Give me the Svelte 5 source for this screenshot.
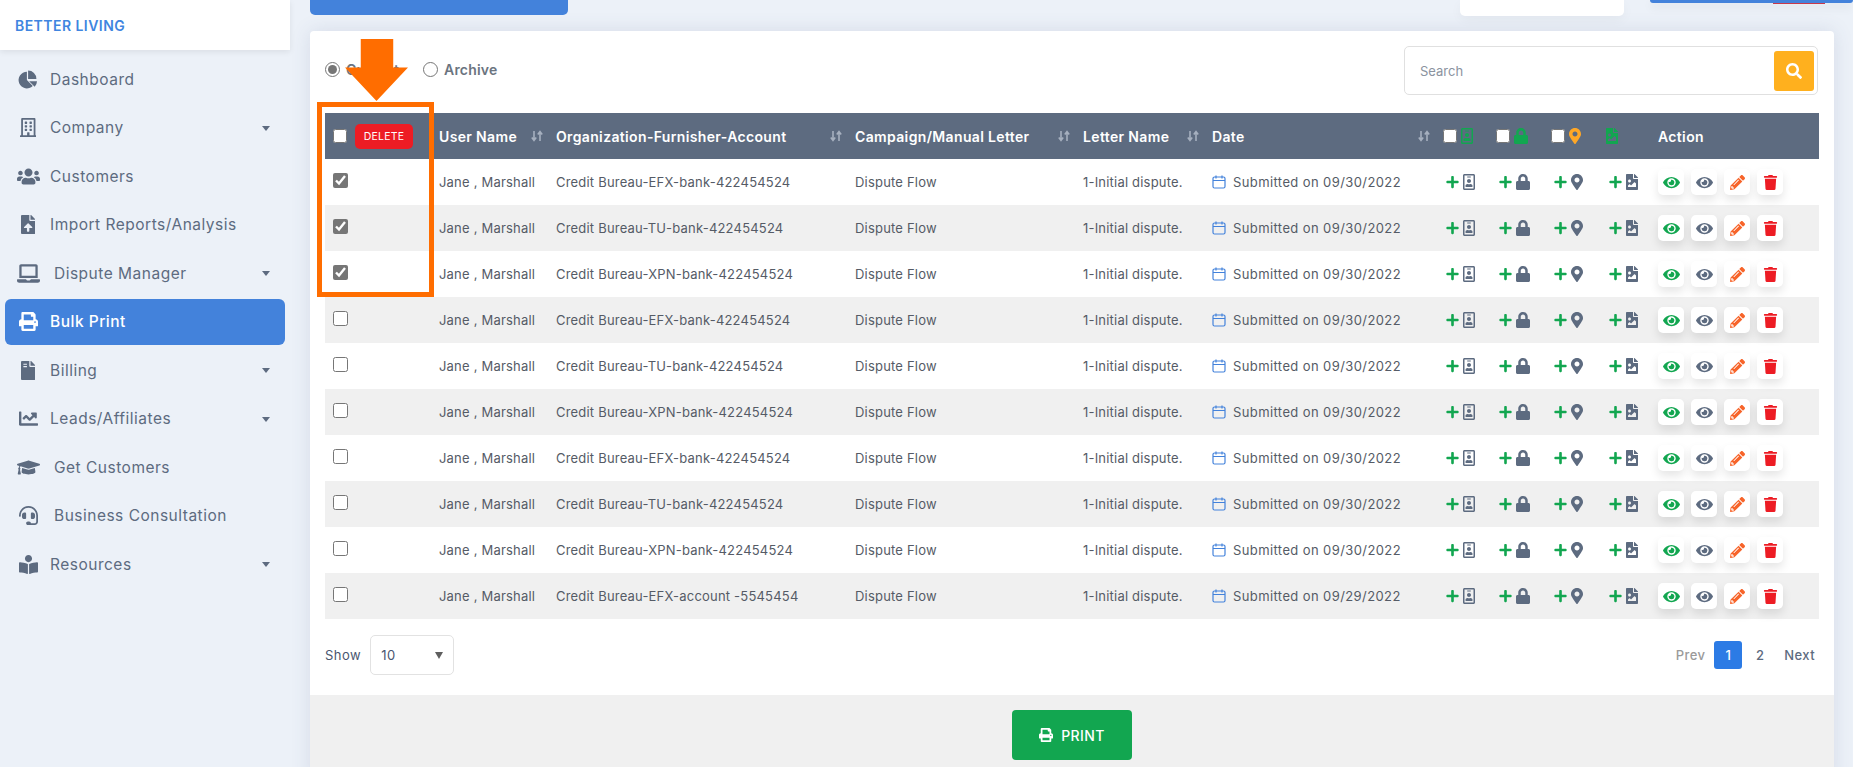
<script>
  const icons = {
    pie: [544, 'M240 48V272L398 430A224 224 0 1 1 240 48zM272 16A224 224 0 0 1 496 240H272zM300 304H512A224 224 0 0 1 450 454z'],
    building: [448, 'M128 148v-40c0-6.6 5.4-12 12-12h40c6.6 0 12 5.4 12 12v40c0 6.6-5.4 12-12 12h-40c-6.6 0-12-5.4-12-12zm140 12h40c6.6 0 12-5.4 12-12v-40c0-6.6-5.4-12-12-12h-40c-6.6 0-12 5.4-12 12v40c0 6.6 5.4 12 12 12zm-128 96h40c6.6 0 12-5.4 12-12v-40c0-6.6-5.4-12-12-12h-40c-6.6 0-12 5.4-12 12v40c0 6.6 5.4 12 12 12zm128 0h40c6.6 0 12-5.4 12-12v-40c0-6.6-5.4-12-12-12h-40c-6.6 0-12 5.4-12 12v40c0 6.6 5.4 12 12 12zm-76 84v-40c0-6.6-5.4-12-12-12h-40c-6.6 0-12 5.4-12 12v40c0 6.6 5.4 12 12 12h40c6.6 0 12-5.4 12-12zm76 12h40c6.6 0 12-5.4 12-12v-40c0-6.6-5.4-12-12-12h-40c-6.6 0-12 5.4-12 12v40c0 6.6 5.4 12 12 12zm180 124v36H0v-36c0-6.6 5.4-12 12-12h19.5V24c0-13.3 10.7-24 24-24h337c13.3 0 24 10.7 24 24v440H436c6.6 0 12 5.4 12 12zM79.5 463H192v-67c0-6.6 5.4-12 12-12h40c6.6 0 12 5.4 12 12v67h112.5V49L80 48l-.5 415z'],
    users: [640, 'M96 224c35.3 0 64-28.7 64-64s-28.7-64-64-64-64 28.7-64 64 28.7 64 64 64zm448 0c35.3 0 64-28.7 64-64s-28.7-64-64-64-64 28.7-64 64 28.7 64 64 64zm32 32h-64c-17.6 0-33.5 7.1-45.1 18.6 40.3 22.1 68.9 62 75.1 109.4h66c17.7 0 32-14.3 32-32v-32c0-35.3-28.7-64-64-64zm-256 0c61.9 0 112-50.1 112-112S381.9 32 320 32 208 82.1 208 144s50.1 112 112 112zm76.8 32h-8.3c-20.8 10-43.9 16-68.5 16s-47.6-6-68.5-16h-8.3C179.6 288 128 339.6 128 403.2V432c0 26.5 21.5 48 48 48h288c26.5 0 48-21.5 48-48v-28.8c0-63.6-51.6-115.2-115.2-115.2zm-223.7-13.4C161.5 263.1 145.6 256 128 256H64c-35.3 0-64 28.7-64 64v32c0 17.7 14.3 32 32 32h65.9c6.3-47.4 34.9-87.3 75.2-109.4z'],
    upload: [384, 'M224 136V0H24C10.7 0 0 10.7 0 24v464c0 13.3 10.7 24 24 24h336c13.3 0 24-10.7 24-24V160H248c-13.2 0-24-10.8-24-24zm65.18 216.01H224v80c0 8.84-7.16 16-16 16h-32c-8.84 0-16-7.16-16-16v-80H94.82c-14.28 0-21.41-17.29-11.27-27.36l96.42-95.7c6.65-6.61 17.39-6.61 24.04 0l96.42 95.7c10.15 10.07 3.03 27.36-11.25 27.36zM377 105L279.1 7c-4.5-4.5-10.6-7-17-7H256v128h128v-6.1c0-6.3-2.5-12.4-7-16.9z'],
    laptop: [640, 'M624 416H381.54c-.74 19.81-14.71 32-32.74 32H288c-18.69 0-33.02-17.47-32.77-32H16c-8.8 0-16 7.2-16 16v16c0 35.2 28.8 64 64 64h512c35.2 0 64-28.8 64-64v-16c0-8.8-7.2-16-16-16zM576 48c0-26.4-21.6-48-48-48H112C85.6 0 64 21.6 64 48v336h512V48zm-64 272H128V64h384v256z'],
    print: [512, 'M448 192V77.25c0-8.49-3.37-16.62-9.37-22.63L393.37 9.37c-6-6-14.14-9.37-22.63-9.37H96C78.33 0 64 14.33 64 32v160c-35.35 0-64 28.65-64 64v112c0 8.84 7.16 16 16 16h48v96c0 17.67 14.33 32 32 32h320c17.67 0 32-14.33 32-32v-96h48c8.84 0 16-7.16 16-16V256c0-35.35-28.65-64-64-64zm-64 256H128v-96h256v96zm0-224H128V64h192v48c0 8.84 7.16 16 16 16h48v96zm48 72c-13.25 0-24-10.75-24-24 0-13.26 10.75-24 24-24s24 10.74 24 24c0 13.25-10.75 24-24 24z'],
    invoice: [384, 'M377 105L279.1 7c-4.5-4.5-10.6-7-17-7H256v128h128v-6.1c0-6.3-2.5-12.4-7-16.9zM224 136V0H24C10.7 0 0 10.7 0 24v464c0 13.3 10.7 24 24 24h336c13.3 0 24-10.7 24-24V160H248c-13.2 0-24-10.8-24-24zM64 72h96v32H64zm0 64h96v32H64zm144 160c-40 0-48 50 0 58 28 5 28 22 0 22h-40v30h28v28h30v-28c44-2 46-62 0-72-30-6-28-20 0-20h36v-30h-26v-26h-30v28z'],
    chart: [512, 'M496 384H64V80c0-8.84-7.16-16-16-16H16C7.16 64 0 71.16 0 80v336c0 17.67 14.33 32 32 32h464c8.84 0 16-7.16 16-16v-32c0-8.84-7.16-16-16-16zM464 96H345.94c-21.38 0-32.09 25.85-16.97 40.97l32.4 32.4L288 242.75l-73.37-73.37c-12.5-12.5-32.76-12.5-45.25 0l-68.69 68.69c-6.25 6.25-6.25 16.38 0 22.63l22.62 22.62c6.25 6.25 16.38 6.25 22.63 0L192 237.25l73.37 73.37c12.5 12.5 32.76 12.5 45.25 0l96-96 32.4 32.4c15.12 15.12 40.97 4.41 40.97-16.97V112c.01-8.84-7.15-16-15.99-16z'],
    cap: [640, 'M622.34 153.2L343.4 67.5c-15.2-4.67-31.6-4.67-46.79 0L17.66 153.2c-23.54 7.23-23.54 38.36 0 45.59l48.63 14.94c-10.67 13.19-17.23 29.28-17.88 46.9C38.78 266.15 32 276.11 32 288c0 10.78 5.68 19.85 13.86 25.65L20.33 428.53C18.11 438.52 25.71 448 35.94 448h56.11c10.24 0 17.84-9.48 15.62-19.47L82.14 313.65C90.32 307.85 96 298.78 96 288c0-11.57-6.47-21.25-15.66-26.87.76-15.02 8.44-28.3 20.69-36.72L296.6 284.5c9.06 2.78 26.44 6.25 46.79 0l278.95-85.7c23.55-7.24 23.55-38.36 0-45.6zM352.79 315.09c-28.53 8.76-52.84 3.92-65.59 0l-145.02-44.55L128 384c0 35.35 85.96 64 192 64s192-28.65 192-64l-14.18-113.47-145.03 44.56z'],
    headset: [512, 'M192 208c0-17.67-14.33-32-32-32h-16c-35.35 0-64 28.65-64 64v48c0 35.35 28.65 64 64 64h16c17.67 0 32-14.33 32-32V208zm176 144c35.35 0 64-28.65 64-64v-48c0-35.35-28.65-64-64-64h-16c-17.67 0-32 14.33-32 32v112c0 17.67 14.33 32 32 32h16zM256 0C113.18 0 4.58 118.83 0 256v16c0 8.84 7.16 16 16 16h16c8.84 0 16-7.16 16-16v-16c0-114.69 93.31-208 208-208s208 93.31 208 208h-.12c.08 2.43.12 165.72.12 165.72 0 23.35-18.93 42.28-42.28 42.28H320c0-26.51-21.49-48-48-48h-32c-26.51 0-48 21.49-48 48s21.49 48 48 48h181.72c49.86 0 90.28-40.42 90.28-90.28V256C507.42 118.83 398.82 0 256 0z'],
    reader: [512, 'M352 96c0-53.02-42.98-96-96-96s-96 42.98-96 96 42.98 96 96 96 96-42.98 96-96zM233.59 241.1c-59.33-36.32-155.43-46.3-203.79-49.05C13.55 191.13 0 203.51 0 219.14v222.8c0 14.33 11.59 26.28 26.49 27.05 43.66 2.29 131.99 10.68 193.04 41.43 9.37 4.72 20.48-1.71 20.48-11.87V252.56c-.01-4.67-2.32-8.95-6.42-11.46zm248.61-49.05c-48.35 2.74-144.46 12.73-203.78 49.05-4.1 2.51-6.41 6.96-6.41 11.63v245.79c0 10.19 11.14 16.63 20.54 11.9 61.04-30.72 149.32-39.11 192.97-41.4 14.9-.78 26.49-12.73 26.49-27.06V219.14c-.01-15.63-13.56-28.01-26.81-27.09z'],
    search: [512, 'M505 442.7L405.3 343c-4.5-4.5-10.6-7-17-7H372c27.6-35.3 44-79.7 44-128C416 93.1 322.9 0 208 0S0 93.1 0 208s93.1 208 208 208c48.3 0 92.7-16.4 128-44v16.3c0 6.4 2.5 12.5 7 17l99.7 99.7c9.4 9.4 24.6 9.4 33.9 0l28.3-28.3c9.4-9.4 9.4-24.6.1-34zM208 336c-70.7 0-128-57.2-128-128 0-70.7 57.2-128 128-128 70.7 0 128 57.2 128 128 0 70.7-57.2 128-128 128z'],
    plus: [448, 'M416 208H272V64c0-17.67-14.33-32-32-32h-32c-17.67 0-32 14.33-32 32v144H32c-17.67 0-32 14.33-32 32v32c0 17.67 14.33 32 32 32h144v144c0 17.67 14.33 32 32 32h32c17.67 0 32-14.33 32-32V304h144c17.67 0 32-14.33 32-32v-32c0-17.67-14.33-32-32-32z'],
    badge: [384, 'M336 0H48C21.5 0 0 21.5 0 48v416c0 26.5 21.5 48 48 48h288c26.5 0 48-21.5 48-48V48c0-26.5-21.5-48-48-48zm0 464H48V48h288v416zM144 112h96c8.8 0 16-7.2 16-16s-7.2-16-16-16h-96c-8.8 0-16 7.2-16 16s7.2 16 16 16zm48 176c35.3 0 64-28.7 64-64s-28.7-64-64-64-64 28.7-64 64 28.7 64 64 64zm-89.6 128h179.2c12.4 0 22.4-8.6 22.4-19.2v-19.2c0-31.8-30.1-57.6-67.2-57.6-10.8 0-18.7 8-44.8 8-26.9 0-33.4-8-44.8-8-37.1 0-67.2 25.8-67.2 57.6v19.2c0 10.6 10 19.2 22.4 19.2z'],
    lock: [448, 'M400 224h-24v-72C376 68.2 307.8 0 224 0S72 68.2 72 152v72H48c-26.5 0-48 21.5-48 48v192c0 26.5 21.5 48 48 48h352c26.5 0 48-21.5 48-48V272c0-26.5-21.5-48-48-48zm-104 0H152v-72c0-39.7 32.3-72 72-72s72 32.3 72 72v72z'],
    marker: [384, 'M172.268 501.67C26.97 291.031 0 256.28 0 192 0 85.961 85.961 0 192 0s192 85.961 192 192c0 64.28-26.97 99.031-172.268 309.67-9.535 13.774-29.93 13.773-39.464 0zM192 272c44.183 0 80-35.817 80-80s-35.817-80-80-80-80 35.817-80 80 35.817 80 80 80z'],
    fileimg: [384, 'M384 121.941V128H256V0h6.059a24 24 0 0 1 16.97 7.029l97.941 97.941a24.002 24.002 0 0 1 7.03 16.971zM248 160c-13.2 0-24-10.8-24-24V0H24C10.745 0 0 10.745 0 24v464c0 13.255 10.745 24 24 24h336c13.255 0 24-10.745 24-24V160H248zm-135.455 16c26.51 0 48 21.49 48 48s-21.49 48-48 48-48-21.49-48-48 21.491-48 48-48zm208 240h-256l.485-48.485L104.545 328c4.686-4.686 11.799-4.201 16.485.485L160.545 368 264.06 264.485c4.686-4.686 12.284-4.686 16.971 0L320.545 304v112z'],
    eye: [576, 'M572.52 241.4C518.29 135.59 410.93 64 288 64S57.68 135.64 3.48 241.41a32.35 32.35 0 0 0 0 29.19C57.71 376.41 165.07 448 288 448s230.32-71.64 284.52-177.41a32.35 32.35 0 0 0 0-29.19zM288 400a144 144 0 1 1 144-144 143.93 143.93 0 0 1-144 144zm0-240a95.31 95.31 0 0 0-25.31 3.79 47.85 47.85 0 0 1-66.9 66.9A95.78 95.78 0 1 0 288 160z'],
    pencil: [512, 'M497.9 142.1l-46.1 46.1c-4.7 4.7-12.3 4.7-17 0l-111-111c-4.7-4.7-4.7-12.3 0-17l46.1-46.1c18.7-18.7 49.1-18.7 67.9 0l60.1 60.1c18.8 18.7 18.8 49.1 0 67.9zM284.2 99.8L21.6 362.4.4 483.9c-2.9 16.4 11.4 30.6 27.8 27.8l121.5-21.3 262.6-262.6c4.7-4.7 4.7-12.3 0-17l-111-111c-4.8-4.7-12.4-4.7-17.1 0zM124.1 339.9c-5.5-5.5-5.5-14.3 0-19.8l154-154c5.5-5.5 14.3-5.5 19.8 0s5.5 14.3 0 19.8l-154 154c-5.5 5.5-14.3 5.5-19.8 0zM88 424h48v36.3l-64.5 11.3-31.1-31.1L51.7 376H88v48z'],
    trash: [448, 'M432 32H312l-9.4-18.7A24 24 0 0 0 281.1 0H166.8a23.72 23.72 0 0 0-21.4 13.3L136 32H16A16 16 0 0 0 0 48v32a16 16 0 0 0 16 16h416a16 16 0 0 0 16-16V48a16 16 0 0 0-16-16zM53.2 467a48 48 0 0 0 47.9 45h245.8a48 48 0 0 0 47.9-45L416 128H32z']
  };

  const menu = [
    { label: 'Dashboard', icon: 'pie' },
    { label: 'Company', icon: 'building', caret: true },
    { label: 'Customers', icon: 'users' },
    { label: 'Import Reports/Analysis', icon: 'upload' },
    { label: 'Dispute Manager', icon: 'laptop', caret: true, wide: true },
    { label: 'Bulk Print', icon: 'print', active: true },
    { label: 'Billing', icon: 'invoice', caret: true },
    { label: 'Leads/Affiliates', icon: 'chart', caret: true },
    { label: 'Get Customers', icon: 'cap', wide: true },
    { label: 'Business Consultation', icon: 'headset', wide: true },
    { label: 'Resources', icon: 'reader', caret: true }
  ];

  const columns = ['User Name', 'Organization-Furnisher-Account', 'Campaign/Manual Letter', 'Letter Name', 'Date'];

  const accounts = [
    'EFX-bank-422454524', 'TU-bank-422454524', 'XPN-bank-422454524',
    'EFX-bank-422454524', 'TU-bank-422454524', 'XPN-bank-422454524',
    'EFX-bank-422454524', 'TU-bank-422454524', 'XPN-bank-422454524',
    'EFX-account -5545454'
  ];

  const rows = accounts.map((account, i) => ({
    org: `Credit Bureau-${account}`,
    date: i === 9 ? '09/29/2022' : '09/30/2022',
    checked: i < 3
  }));
</script>

{#snippet icon(name, cls)}
  <svg class="icon {cls}" viewBox="0 0 {icons[name][0]} 512" aria-hidden="true"><path d={icons[name][1]} /></svg>
{/snippet}

{#snippet sortArrows()}
  <svg class="sort" viewBox="0 0 12 12" aria-hidden="true">
    <path d="M3 1v9M.8 7.6 3 10.4l2.2-2.8M9 11V2M6.8 4.4 9 1.6l2.2 2.8" />
  </svg>
{/snippet}

<div class="page">
  <aside class="sidebar">
    <div class="logo">BETTER LIVING</div>
    <nav class="menu">
      {#each menu as item (item.label)}
        <div class="item" class:active={item.active}>
          <span class="item-icon">{@render icon(item.icon, 'side-icon')}</span>
          <span class="item-label" class:wide={item.wide}>{item.label}</span>
          {#if item.caret}<span class="caret"></span>{/if}
        </div>
      {/each}
    </nav>
  </aside>

  <main class="content">
    <div class="topbar">
      <div class="top-btn"></div>
      <div class="top-card"></div>
      <div class="top-bar-blue"></div>
    </div>

    <section class="card">
      <div class="card-body">
        <div class="filters">
          <div class="radios">
            <label class="radio"><input type="radio" name="kind" checked /> Current</label>
            <label class="radio"><input type="radio" name="kind" /> Archive</label>
          </div>
          <div class="search">
            <span class="search-text">Search</span>
            <button class="search-btn">{@render icon('search', 'search-icon')}</button>
          </div>
        </div>

        <table>
          <thead>
            <tr>
              <th><div class="th-in"><input type="checkbox" /><button class="delete">DELETE</button></div></th>
              {#each columns as col (col)}
                <th><div class="th-in between"><span>{col}</span>{@render sortArrows()}</div></th>
              {/each}
              <th><div class="th-in tight"><input type="checkbox" />{@render icon('badge', 'cell-icon green')}</div></th>
              <th><div class="th-in tight"><input type="checkbox" />{@render icon('lock', 'cell-icon green')}</div></th>
              <th><div class="th-in tight"><input type="checkbox" />{@render icon('marker', 'cell-icon amber')}</div></th>
              <th><div class="th-in">{@render icon('fileimg', 'cell-icon green')}</div></th>
              <th>Action</th>
            </tr>
          </thead>
          <tbody>
            {#each rows as row, i (i)}
              <tr>
                <td><input class="row-check" type="checkbox" checked={row.checked} /></td>
                <td>Jane , Marshall</td>
                <td>{row.org}</td>
                <td>Dispute Flow</td>
                <td>1-Initial dispute.</td>
                <td>
                  <div class="date">
                    <svg class="cal" viewBox="0 0 14 14" aria-hidden="true">
                      <rect x="1" y="2" width="12" height="11" rx="1.5" />
                      <path d="M1 5.5h12M4 .5v3M10 .5v3" />
                    </svg>
                    Submitted on {row.date}
                  </div>
                </td>
                {#each ['badge', 'lock', 'marker', 'fileimg'] as name (name)}
                  <td>
                    <div class="add">
                      {@render icon('plus', 'plus')}
                      {@render icon(name, 'cell-icon slate')}
                    </div>
                  </td>
                {/each}
                <td>
                  <div class="actions">
                    <button class="act">{@render icon('eye', 'act-icon green')}</button>
                    <button class="act">{@render icon('eye', 'act-icon slate')}</button>
                    <button class="act">{@render icon('pencil', 'act-icon orange')}</button>
                    <button class="act">{@render icon('trash', 'act-icon red')}</button>
                  </div>
                </td>
              </tr>
            {/each}
          </tbody>
        </table>

        <div class="table-foot">
          <div class="show">
            <span>Show</span>
            <div class="select"><span>10</span><span class="select-arrow"></span></div>
          </div>
          <div class="pager">
            <span class="prev">Prev</span>
            <span class="num current">1</span>
            <span class="num">2</span>
            <span class="next">Next</span>
          </div>
        </div>
      </div>

      <div class="card-foot">
        <button class="print">{@render icon('print', 'print-icon')} PRINT</button>
      </div>
    </section>
  </main>

  <div class="mark-box"></div>
  <svg class="mark-arrow" viewBox="0 0 64 63" aria-hidden="true">
    <polygon points="16,0 49,0 49,29 64,29 32,63 0,29 16,29" />
  </svg>
</div>

<style>
  :global(body) {
    margin: 0;
    background: #fff;
    font-family: Inter, 'Open Sans', sans-serif;
  }

  .page {
    position: relative;
    display: flex;
    width: 1853px;
    height: 767px;
    overflow: hidden;
    background: #ecf1f8;
  }

  .sidebar {
    width: 290px;
    flex: none;
  }

  .logo {
    height: 50px;
    display: flex;
    align-items: center;
    padding-left: 15px;
    background: #fff;
    box-shadow: 0 2px 6px rgba(0, 0, 0, 0.08);
    color: #3f85e0;
    font-size: 14px;
    font-weight: 600;
    letter-spacing: 0.45px;
  }

  .menu {
    padding-top: 6px;
    display: flex;
    flex-direction: column;
    gap: 2.5px;
  }

  .item {
    position: relative;
    height: 46px;
    margin: 0 5px;
    width: 280px;
    display: flex;
    align-items: center;
    color: #5d6b80;
    border-radius: 6px;
    font-size: 15.5px;
    letter-spacing: 0.5px;
  }

  .item.active {
    background: #4382db;
    color: #fff;
    font-weight: 500;
  }

  .item-icon {
    width: 45px;
    flex: none;
    display: flex;
    justify-content: center;
    padding-left: 5px;
    box-sizing: border-box;
    transform: translateX(-2px);
  }

  .item-label.wide {
    margin-left: 4px;
  }

  .caret {
    position: absolute;
    right: 15px;
    top: 21px;
    border-left: 4.5px solid transparent;
    border-right: 4.5px solid transparent;
    border-top: 5px solid #5d6b80;
  }

  .icon {
    display: block;
    fill: currentColor;
  }

  :global(.side-icon) {
    height: 19px;
    max-width: 23px;
  }

  .content {
    flex: 1;
    min-width: 0;
    padding: 0 19px 0 20px;
  }

  .topbar {
    position: relative;
    height: 16px;
    margin-bottom: 15px;
  }

  .top-btn {
    position: absolute;
    left: 0;
    top: 0;
    width: 258px;
    height: 15px;
    background: #4382db;
    border-radius: 0 0 5px 5px;
  }

  .top-card {
    position: absolute;
    left: 1150px;
    top: 0;
    width: 164px;
    height: 16px;
    background: #fff;
    border-radius: 0 0 5px 5px;
    box-shadow: 0 4px 12px rgba(0, 0, 0, 0.04);
  }

  .top-bar-blue {
    position: absolute;
    left: 1340px;
    top: 0;
    width: 203px;
    height: 3px;
    background: #4382db;
    border-radius: 0 0 4px 4px;
    box-shadow: 0 4px 10px rgba(0, 0, 0, 0.1);
  }

  .top-bar-blue::after {
    content: '';
    position: absolute;
    left: 123px;
    top: 3px;
    width: 52px;
    height: 1px;
    background: #c8384a;
  }

  .card {
    background: #fff;
    border-radius: 4px 4px 0 0;
    box-shadow: 0 0 20px rgba(60, 80, 120, 0.13);
  }

  .card-body {
    padding: 15px 15px 0;
  }

  .filters {
    display: flex;
    justify-content: space-between;
    align-items: center;
    height: 49px;
    margin-bottom: 18px;
  }

  .radios {
    display: flex;
    gap: 24px;
    margin-top: -3px;
  }

  .radio {
    display: flex;
    align-items: center;
    gap: 6px;
    color: #6b7480;
    font-size: 14px;
    font-weight: 600;
    letter-spacing: 0.2px;
  }

  .radio input {
    width: 15px;
    height: 15px;
    margin: 0;
    accent-color: #767676;
  }

  .search {
    width: 414px;
    height: 49px;
    box-sizing: border-box;
    margin-right: 1px;
    display: flex;
    align-items: center;
    justify-content: space-between;
    padding: 0 3px 0 15px;
    border: 1px solid #e0e0e0;
    border-radius: 5px;
  }

  .search-text {
    color: #8b93a0;
    font-size: 13px;
  }

  .search-btn {
    width: 40px;
    height: 40px;
    padding: 0;
    border: 0;
    border-radius: 3px;
    background: #ffb01e;
    color: #fff;
    display: flex;
    align-items: center;
    justify-content: center;
  }

  :global(.search-icon) {
    width: 16px;
    height: 16px;
  }

  table {
    width: 1494px;
    table-layout: fixed;
    border-collapse: collapse;
  }

  th,
  td {
    box-sizing: border-box;
  }

  th:nth-child(1) { width: 104px; }
  th:nth-child(2) { width: 117px; }
  th:nth-child(3) { width: 299px; }
  th:nth-child(4) { width: 228px; }
  th:nth-child(5) { width: 129px; }
  th:nth-child(6) { width: 231px; }
  th:nth-child(7) { width: 53px; }
  th:nth-child(8) { width: 55px; }
  th:nth-child(9) { width: 55px; }
  th:nth-child(10) { width: 52px; }

  thead tr {
    height: 46px;
    background: #5d6b80;
  }

  th {
    padding: 0 3px 0 10px;
    color: #fff;
    font-size: 14px;
    font-weight: 600;
    letter-spacing: 0.35px;
    text-align: left;
    white-space: nowrap;
  }

  th:first-child,
  td:first-child {
    padding-left: 8px;
  }

  .th-in {
    display: flex;
    align-items: center;
    gap: 8px;
  }

  .th-in.between {
    justify-content: space-between;
  }

  .th-in.tight {
    gap: 4px;
  }

  th input {
    width: 14px;
    height: 14px;
    margin: 0;
  }

  .delete {
    width: 58px;
    height: 25px;
    padding: 0;
    border: 0;
    border-radius: 5px;
    background: #ed1c24;
    color: #fff;
    font-family: inherit;
    font-size: 10.5px;
    letter-spacing: 0.2px;
  }

  .sort {
    width: 12px;
    height: 12px;
    flex: none;
    fill: none;
    stroke: #a6b0bf;
    stroke-width: 1.6;
  }

  :global(.cell-icon) {
    height: 16px;
    width: auto;
  }

  :global(.green) { color: #12a650; }
  :global(.amber) { color: #ffa726; }
  :global(.slate) { color: #5d6b80; }
  :global(.orange) { color: #f7642a; }
  :global(.red) { color: #ed1c24; }

  tbody tr {
    height: 46px;
  }

  tbody tr:nth-child(even) {
    background: #f0f0f0;
  }

  td {
    padding: 0 3px 0 10px;
    color: #555b66;
    font-size: 13px;
    letter-spacing: 0.2px;
    white-space: nowrap;
  }

  .row-check {
    display: block;
    width: 15px;
    height: 15px;
    margin: 0 0 4px;
    accent-color: #767676;
  }

  .date {
    display: flex;
    align-items: center;
    gap: 7px;
    letter-spacing: 0.4px;
  }

  .cal {
    width: 14px;
    height: 14px;
    flex: none;
    fill: none;
    stroke: #4382db;
    stroke-width: 1.2;
  }

  .add {
    display: flex;
    align-items: center;
    gap: 4px;
    padding-left: 3px;
  }

  :global(.plus) {
    width: 13px;
    height: 14px;
    color: #12a650;
  }

  .actions {
    display: flex;
    gap: 7px;
  }

  .act {
    width: 26px;
    height: 26px;
    padding: 0;
    border: 0;
    border-radius: 5px;
    background: #fff;
    box-shadow: 0 5px 10px rgba(0, 0, 0, 0.1);
    display: flex;
    align-items: center;
    justify-content: center;
  }

  :global(.act-icon) {
    width: 17px;
    height: 15px;
  }

  .table-foot {
    display: flex;
    justify-content: space-between;
    align-items: center;
    height: 76px;
  }

  .show {
    display: flex;
    align-items: center;
    gap: 9px;
    color: #4a5670;
    font-size: 13px;
    letter-spacing: 0.5px;
  }

  .show > span {
    margin-top: -4px;
  }

  .select {
    width: 84px;
    height: 40px;
    box-sizing: border-box;
    display: flex;
    align-items: center;
    justify-content: space-between;
    padding: 0 10px;
    border: 1px solid #e2e2e2;
    border-radius: 5px;
    margin-top: -4px;
  }

  .select-arrow {
    border-left: 4px solid transparent;
    border-right: 4px solid transparent;
    border-top: 7px solid #5f5f5f;
  }

  .pager {
    display: flex;
    align-items: center;
    margin-top: -4px;
    padding-right: 4px;
    font-size: 13px;
    font-weight: 500;
    letter-spacing: 0.4px;
    color: #5d6b80;
  }

  .prev {
    color: #9a9a9a;
    margin-right: 9px;
  }

  .num {
    width: 28px;
    height: 28px;
    display: flex;
    align-items: center;
    justify-content: center;
    border-radius: 3px;
  }

  .num.current {
    background: #2c7be5;
    color: #fff;
    margin-right: 4px;
  }

  .next {
    margin-left: 10px;
  }

  .card-foot {
    height: 72px;
    display: flex;
    justify-content: center;
    padding-top: 15px;
    background: #f0f0f0;
  }

  .print {
    width: 120px;
    height: 50px;
    border: 0;
    border-radius: 4px;
    background: #12a650;
    color: #fff;
    font-family: inherit;
    font-size: 14px;
    font-weight: 500;
    letter-spacing: 0.4px;
    display: flex;
    align-items: center;
    justify-content: center;
    gap: 8px;
  }

  :global(.print-icon) {
    width: 14px;
    height: 14px;
  }

  .mark-box {
    position: absolute;
    left: 317px;
    top: 102px;
    width: 117px;
    height: 195px;
    box-sizing: border-box;
    border: 5px solid #ff6d00;
  }

  .mark-arrow {
    position: absolute;
    left: 345px;
    top: 39px;
    width: 63px;
    height: 62px;
    fill: #ff6d00;
  }
</style>
